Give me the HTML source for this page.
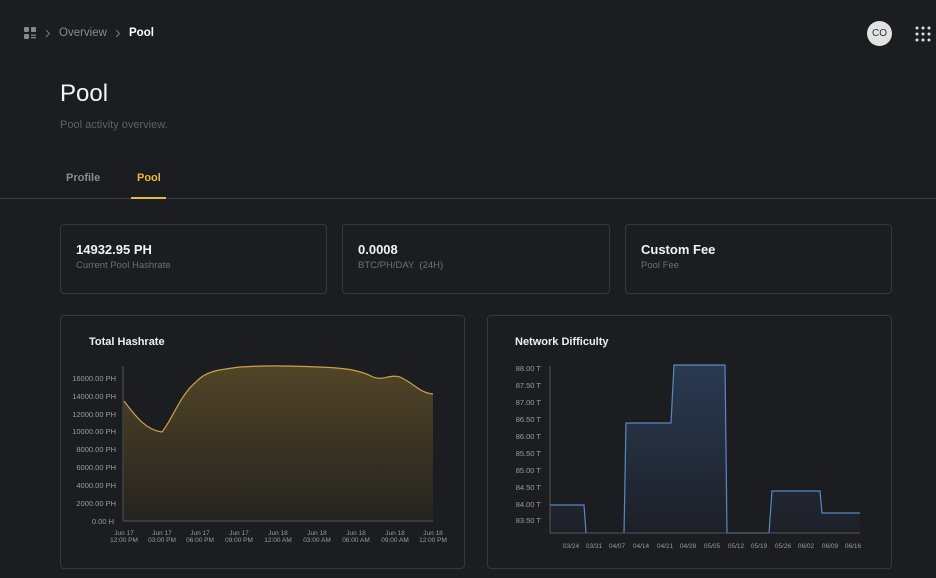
<!DOCTYPE html>
<html><head><meta charset="utf-8"><style>
*{margin:0;padding:0;box-sizing:border-box}
body{width:936px;height:578px;background:#1c1d20;font-family:"Liberation Sans",sans-serif;color:#fff;position:relative;overflow:hidden}
.a{position:absolute}
.card{position:absolute;border:1px solid #37383c;border-radius:4px}
.big{font-weight:bold;font-size:13px;color:#f2f2f2}
.sm{font-size:9.5px;color:#6f7075}
</style></head><body>
<svg class="a" style="left:23px;top:26px" width="14" height="14" viewBox="0 0 14 14"><rect x="1" y="1" width="5" height="5" rx="1" fill="#888"/><rect x="8" y="1" width="5" height="5" rx="1" fill="#888"/><rect x="1" y="8" width="5" height="5" rx="1" fill="#888"/><rect x="8" y="8.5" width="5" height="1.3" fill="#888"/><rect x="8" y="11" width="5" height="1.3" fill="#888"/></svg>
<svg class="a" style="left:45px;top:29px" width="6" height="9"><path d="M1 1 L4.5 4.5 L1 8" fill="none" stroke="#777" stroke-width="1"/></svg>
<div class="a" style="left:59px;top:27px;font-size:11.5px;color:#8a8b8f">Overview</div>
<svg class="a" style="left:115px;top:29px" width="6" height="9"><path d="M1 1 L4.5 4.5 L1 8" fill="none" stroke="#777" stroke-width="1"/></svg>
<div class="a" style="left:129px;top:27px;font-size:11.5px;color:#fff;font-weight:bold">Pool</div>
<div class="a" style="left:867px;top:21px;width:25px;height:25px;border-radius:50%;background:#e2e2e2;color:#333;font-size:10px;text-align:center;line-height:25px">CO</div>
<svg class="a" style="left:915px;top:26px" width="16" height="16"><g fill="#ddd"><circle cx="2" cy="2" r="1.5"/><circle cx="8" cy="2" r="1.5"/><circle cx="14" cy="2" r="1.5"/><circle cx="2" cy="8" r="1.5"/><circle cx="8" cy="8" r="1.5"/><circle cx="14" cy="8" r="1.5"/><circle cx="2" cy="14" r="1.5"/><circle cx="8" cy="14" r="1.5"/><circle cx="14" cy="14" r="1.5"/></g></svg>
<div class="a" style="left:60px;top:80px;font-size:24px;color:#f4f4f4">Pool</div>
<div class="a" style="left:60px;top:119px;font-size:11px;color:#5f6065">Pool activity overview.</div>
<div class="a" style="left:66px;top:172px;font-size:11px;color:#8a8b8f;font-weight:bold">Profile</div>
<div class="a" style="left:137px;top:172px;font-size:11px;color:#e7b93e;font-weight:bold">Pool</div>
<div class="a" style="left:0;top:198px;width:936px;height:1px;background:#3d3e42"></div>
<div class="a" style="left:131px;top:197px;width:35px;height:2px;background:#e7b93e"></div>

<div class="card" style="left:60px;top:224px;width:267px;height:70px"></div>
<div class="a big" style="left:76px;top:242px">14932.95 PH</div>
<div class="a sm" style="left:76px;top:260px">Current Pool Hashrate</div>
<div class="card" style="left:342px;top:224px;width:268px;height:70px"></div>
<div class="a big" style="left:358px;top:242px">0.0008</div>
<div class="a sm" style="left:358px;top:260px">BTC/PH/DAY &nbsp;(24H)</div>
<div class="card" style="left:625px;top:224px;width:267px;height:70px"></div>
<div class="a big" style="left:641px;top:242px">Custom Fee</div>
<div class="a sm" style="left:641px;top:260px">Pool Fee</div>

<div class="card" style="left:60px;top:315px;width:405px;height:254px"></div>
<div class="a" style="left:89px;top:336px;font-size:11px;font-weight:bold;color:#eee">Total Hashrate</div>
<svg class="a" style="left:0;top:0" width="936" height="578" font-family="Liberation Sans" font-size="7.5">
<defs>
<linearGradient id="g1" x1="0" y1="0" x2="0" y2="1"><stop offset="0" stop-color="#524527"/><stop offset="1" stop-color="#24231f"/></linearGradient>
<linearGradient id="g2" x1="0" y1="0" x2="0" y2="1"><stop offset="0" stop-color="#2a3a52"/><stop offset="1" stop-color="#1d2027"/></linearGradient>
</defs>
<g fill="#9a9ba0" text-anchor="end">
<text x="116" y="381">16000.00 PH</text><text x="116" y="399">14000.00 PH</text><text x="116" y="417">12000.00 PH</text><text x="116" y="434">10000.00 PH</text><text x="116" y="452">8000.00 PH</text><text x="116" y="470">6000.00 PH</text><text x="116" y="488">4000.00 PH</text><text x="116" y="506">2000.00 PH</text><text x="114" y="524">0.00 H</text>
</g>
<path d="M124 401 C135 415 145 430 162 432 C172 420 180 395 196 382 C205 372 215 370 240 367 C270 365 290 366 320 367 C345 368 360 370 373 377 C382 381 390 374 400 377 C415 384 420 393 433 394 L433 521 L124 521Z" fill="url(#g1)"/>
<path d="M124 401 C135 415 145 430 162 432 C172 420 180 395 196 382 C205 372 215 370 240 367 C270 365 290 366 320 367 C345 368 360 370 373 377 C382 381 390 374 400 377 C415 384 420 393 433 394" fill="none" stroke="#c9a24a" stroke-width="1.2"/>
<line x1="123" y1="366" x2="123" y2="521" stroke="#555"/><line x1="123" y1="521" x2="433" y2="521" stroke="#555"/>
<g fill="#9a9ba0" font-size="6.5" text-anchor="middle">
<text x="124" y="535">Jun 17</text><text x="124" y="542">12:00 PM</text>
<text x="162" y="535">Jun 17</text><text x="162" y="542">03:00 PM</text>
<text x="200" y="535">Jun 17</text><text x="200" y="542">06:00 PM</text>
<text x="239" y="535">Jun 17</text><text x="239" y="542">09:00 PM</text>
<text x="278" y="535">Jun 18</text><text x="278" y="542">12:00 AM</text>
<text x="317" y="535">Jun 18</text><text x="317" y="542">03:00 AM</text>
<text x="356" y="535">Jun 18</text><text x="356" y="542">06:00 AM</text>
<text x="395" y="535">Jun 18</text><text x="395" y="542">09:00 AM</text>
<text x="433" y="535">Jun 18</text><text x="433" y="542">12:00 PM</text>
</g>
<g fill="#9a9ba0" text-anchor="end">
<text x="541" y="371">88.00 T</text><text x="541" y="388">87.50 T</text><text x="541" y="405">87.00 T</text><text x="541" y="422">86.50 T</text><text x="541" y="439">86.00 T</text><text x="541" y="456">85.50 T</text><text x="541" y="473">85.00 T</text><text x="541" y="490">84.50 T</text><text x="541" y="507">84.00 T</text><text x="541" y="523">83.50 T</text>
</g>
<path d="M550 505 L584 505 L586 533 L624 533 L626 423 L671 423 L674 365 L725 365 L727 533 L769 533 L772 491 L820 491 L822 513 L860 513 L860 533 L550 533Z" fill="url(#g2)"/>
<path d="M550 505 L584 505 L586 533 M624 533 L626 423 L671 423 L674 365 L725 365 L727 533 L769 533 L772 491 L820 491 L822 513 L860 513" fill="none" stroke="#5a88c4" stroke-width="1.2"/>
<line x1="550" y1="366" x2="550" y2="533" stroke="#555"/><line x1="550" y1="533" x2="860" y2="533" stroke="#555"/>
<g fill="#9a9ba0" font-size="6.5" text-anchor="middle">
<text x="571" y="548">03/24</text><text x="594" y="548">03/31</text><text x="617" y="548">04/07</text><text x="641" y="548">04/14</text><text x="665" y="548">04/21</text><text x="688" y="548">04/28</text><text x="712" y="548">05/05</text><text x="736" y="548">05/12</text><text x="759" y="548">05/19</text><text x="783" y="548">05/26</text><text x="806" y="548">06/02</text><text x="830" y="548">06/09</text><text x="853" y="548">06/16</text>
</g>
</svg>
<div class="card" style="left:487px;top:315px;width:405px;height:254px"></div>
<div class="a" style="left:515px;top:336px;font-size:11px;font-weight:bold;color:#eee">Network Difficulty</div>
</body></html>
